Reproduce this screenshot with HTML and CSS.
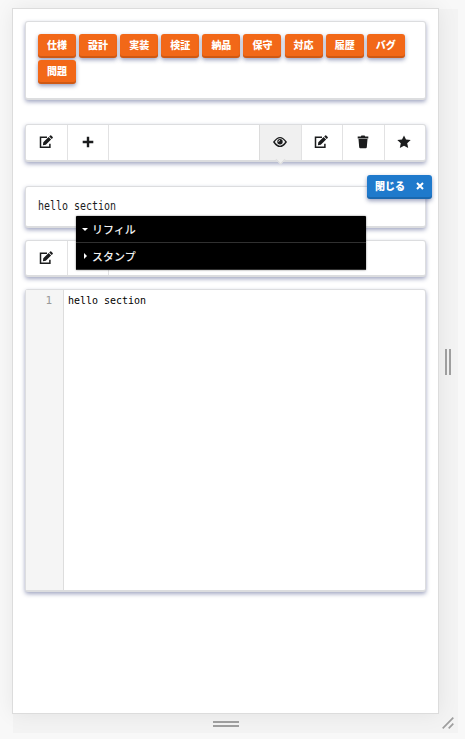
FILE: index.html
```html
<!DOCTYPE html>
<html lang="ja">
<head>
<meta charset="utf-8">
<title>Section editor</title>
<link rel="stylesheet" href="styles.css">
</head>
<body>
<svg class="defs" width="0" height="0">
  <symbol id="edit" viewBox="0 0 14 14"><path d="M8 2.300H1.500v9.900h9.400V8.800" fill="none" stroke="currentColor" stroke-width="1.500"/><path d="M4.300 7.300 9.600 2l2.500 2.500-5.300 5.300-2.900.4zM10.200 1.400l1-1q.5-.4 1 0l1.500 1.500q.4.5 0 1l-1 1z"/></symbol>
  <symbol id="plus" viewBox="0 0 14 14"><path d="M5.800 1.700h2.400v4.100h4.100v2.400H8.200v4.100H5.800V8.200H1.700V5.800h4.100z"/></symbol>
  <symbol id="eye" viewBox="0 0 14 14"><path d="M.9 7q6.100-8.800 12.200 0-6.100 8.800-12.200 0z" fill="none" stroke="currentColor" stroke-width="1.400"/><circle cx="7" cy="6.800" r="2.700"/><path d="M5.600 6.800Q5.600 5.400 7 5.400" fill="none" stroke="#f0f0f0" stroke-width=".8"/></symbol>
  <symbol id="trash" viewBox="0 0 14 14"><path d="M1.700 1.600h3.100l.6-1.100h3.200l.6 1.100h3.100v1.900H1.700zM2.500 4.100h9l-.7 8.100q-.1 1-1.100 1H4.300q-1 0-1.100-1z"/></symbol>
  <symbol id="star" viewBox="0 0 14 14"><path d="m7 .4 2 4.200 4.700.5-3.500 3.200 1 4.800L7 10.700l-4.200 2.400 1-4.800L.3 5.100 5 4.600z"/></symbol>
</svg>
<div class="responsive">
  <main class="viewport">
    <section class="card tags">
      <button class="btn">仕様</button>
      <button class="btn">設計</button>
      <button class="btn">実装</button>
      <button class="btn">検証</button>
      <button class="btn">納品</button>
      <button class="btn">保守</button>
      <button class="btn">対応</button>
      <button class="btn">履歴</button>
      <button class="btn">バグ</button>
      <button class="btn">問題</button>
    </section>
    <nav class="card toolbar">
      <a class="item"><svg><use href="#edit"/></svg></a>
      <a class="item"><svg><use href="#plus"/></svg></a>
      <a class="item first-right active"><svg><use href="#eye"/></svg></a>
      <a class="item right"><svg><use href="#edit"/></svg></a>
      <a class="item right"><svg><use href="#trash"/></svg></a>
      <a class="item right"><svg><use href="#star"/></svg></a>
    </nav>
    <section class="card preview">
      <p class="preview-text">hello section</p>
      <button class="btn close">閉じる<svg viewBox="0 0 8 8"><path d="m1 1 6 6M7 1 1 7"/></svg></button>
      <div class="menu">
        <div class="menu-row"><i class="caret down"></i>リフィル</div>
        <div class="menu-row"><i class="caret"></i>スタンプ</div>
      </div>
    </section>
    <nav class="card toolbar second">
      <a class="item"><svg><use href="#edit"/></svg></a>
      <a class="item"></a>
    </nav>
    <section class="card editor">
      <div class="gutter">1</div>
      <div class="code"><span class="code-text">hello section</span></div>
    </section>
  </main>
  <div class="grip grip-right"><i></i><i></i></div>
  <div class="grip grip-bottom"><i></i><i></i></div>
  <div class="grip"><svg class="corner" viewBox="0 0 12 12"><path d="M.7 11.300 11.300.7M6.700 11.300l4.600-4.600"/></svg></div>
</div>
</body>
</html>
```
FILE: styles.css
```css
* { box-sizing: border-box; }
html { background: #f8f8f8; overflow: hidden; }
body {
  margin: 0;
  padding: 9px 0 0 13px;
  font-family: "Liberation Sans", "Noto Sans CJK JP", sans-serif;
  color: #1b1c1d;
}
.defs { position: absolute; }
.responsive {
  display: grid;
  grid-template-columns: 425px 20px;
  grid-template-rows: 704px 20px;
  background: #f3f3f3;
  width: 445px;
}
.viewport {
  padding: 12px;
  background: #fff;
  box-shadow: 0 0 0 1px #dcdcdc, 0 0 20px rgba(0, 0, 0, .08);
}
.card {
  border: 1px solid #dcdddf;
  border-bottom-width: 2px;
  border-radius: 3px;
  background: #fff;
  box-shadow: 0 2px 4px rgba(34, 46, 110, .42);
}
.tags {
  display: flex;
  flex-wrap: wrap;
  align-content: flex-start;
  gap: 2px 3.100px;
  height: 79px;
  padding: 12px 12px 0;
}
.btn {
  width: 38px;
  height: 24px;
  margin: 0;
  padding: 0 0 3px;
  border: 0;
  border-radius: 3px;
  background: #f26818;
  box-shadow: inset 0 -2px 0 rgba(0, 0, 0, .14), 0 2px 4px rgba(34, 46, 110, .45);
  color: #fff;
  font: 900 10px/20px "Noto Sans CJK JP", sans-serif;
}
.btn:not(.close) { flex: none; }
.toolbar { display: flex; height: 38px; margin-top: 24px; }
.item {
  position: relative;
  display: flex;
  align-items: center;
  justify-content: center;
  width: 41.500px;
  padding-bottom: 1px;
  border-right: 1px solid #e2e2e3;
}
.item svg { width: 14px; height: 14px; fill: currentColor; }
.item.right { border-right: 0; border-left: 1px solid #e2e2e3; }
.item.first-right { margin-left: auto; border-right: 0; border-left: 1px solid #dcdcdc; }
.item.right, .item.first-right { padding-right: 1px; }
.active { background: #f0f0f0; }
.active::after {
  content: "";
  position: absolute;
  bottom: -3px;
  left: 17px;
  width: 6px;
  height: 6px;
  background: #f0f0f0;
  border: 1px solid #dedede;
  border-width: 0 1px 1px 0;
  transform: rotate(45deg);
}
.preview { position: relative; height: 42px; margin-top: 24px; padding: 12px; }
.preview-text {
  margin: 0;
  font: 12px/14px "DejaVu Sans Mono", monospace;
  transform: scaleX(.83);
  transform-origin: 0 0;
  white-space: nowrap;
}
.close {
  position: absolute;
  top: -12px;
  right: -7px;
  display: flex;
  align-items: center;
  width: 65px;
  padding: 0 8px 3px;
  background: #1f7acc;
}
.close svg { width: 8px; height: 8px; margin-left: 11px; fill: none; stroke: #fff; stroke-width: 2; }
.menu {
  position: absolute;
  z-index: 2;
  top: 29px;
  left: 50px;
  width: 290px;
  height: 54px;
  background: #000;
  border-radius: 1px;
  box-shadow: 0 0 2px rgba(0, 0, 0, .55);
}
.menu-row {
  display: flex;
  align-items: center;
  height: 27px;
  padding-left: 6px;
  border-bottom: 1px solid #303030;
  color: #f2f2f2;
  font: 500 11px/26px "Noto Sans CJK JP", sans-serif;
}
.caret { width: 10px; height: 6px; }
.caret::before {
  content: "";
  display: block;
  width: 0;
  margin-left: 2px;
  border: 3px solid transparent;
  border-left: 3px solid #fff;
  border-right: 0;
}
.caret.down { height: 3px; }
.caret.down::before { margin-left: 0; border: 3px solid transparent; border-top-color: #fff; border-bottom: 0; }
.second { height: 37px; margin-top: 12px; }
.editor { display: flex; height: 303px; margin-top: 12px; }
.gutter {
  width: 38px;
  padding: 4px 11px 0 0;
  border-right: 1px solid #ddd;
  background: #f5f5f5;
  color: #999;
  font: 11px/14px "DejaVu Sans Mono", monospace;
  text-align: right;
}
.code { padding: 4px; color: #000; font: 11px/14px "DejaVu Sans Mono", monospace; }
.code-text { display: block; transform: scaleX(.906); transform-origin: 0 0; white-space: nowrap; }
.grip { display: flex; align-items: center; justify-content: center; gap: 2px; }
.grip i { background: #9e9e9e; }
.grip-right i { width: 2px; height: 26px; }
.grip-right { padding-top: 2px; }
.grip-right { padding-right: 1px; }
.grip-bottom { flex-direction: column; padding-top: 1px; }
.grip-bottom i { width: 26px; height: 2px; }
.corner { width: 12px; height: 12px; fill: none; stroke: #9e9e9e; stroke-width: 1.700; margin: 0 0 1px -1px; }
```
